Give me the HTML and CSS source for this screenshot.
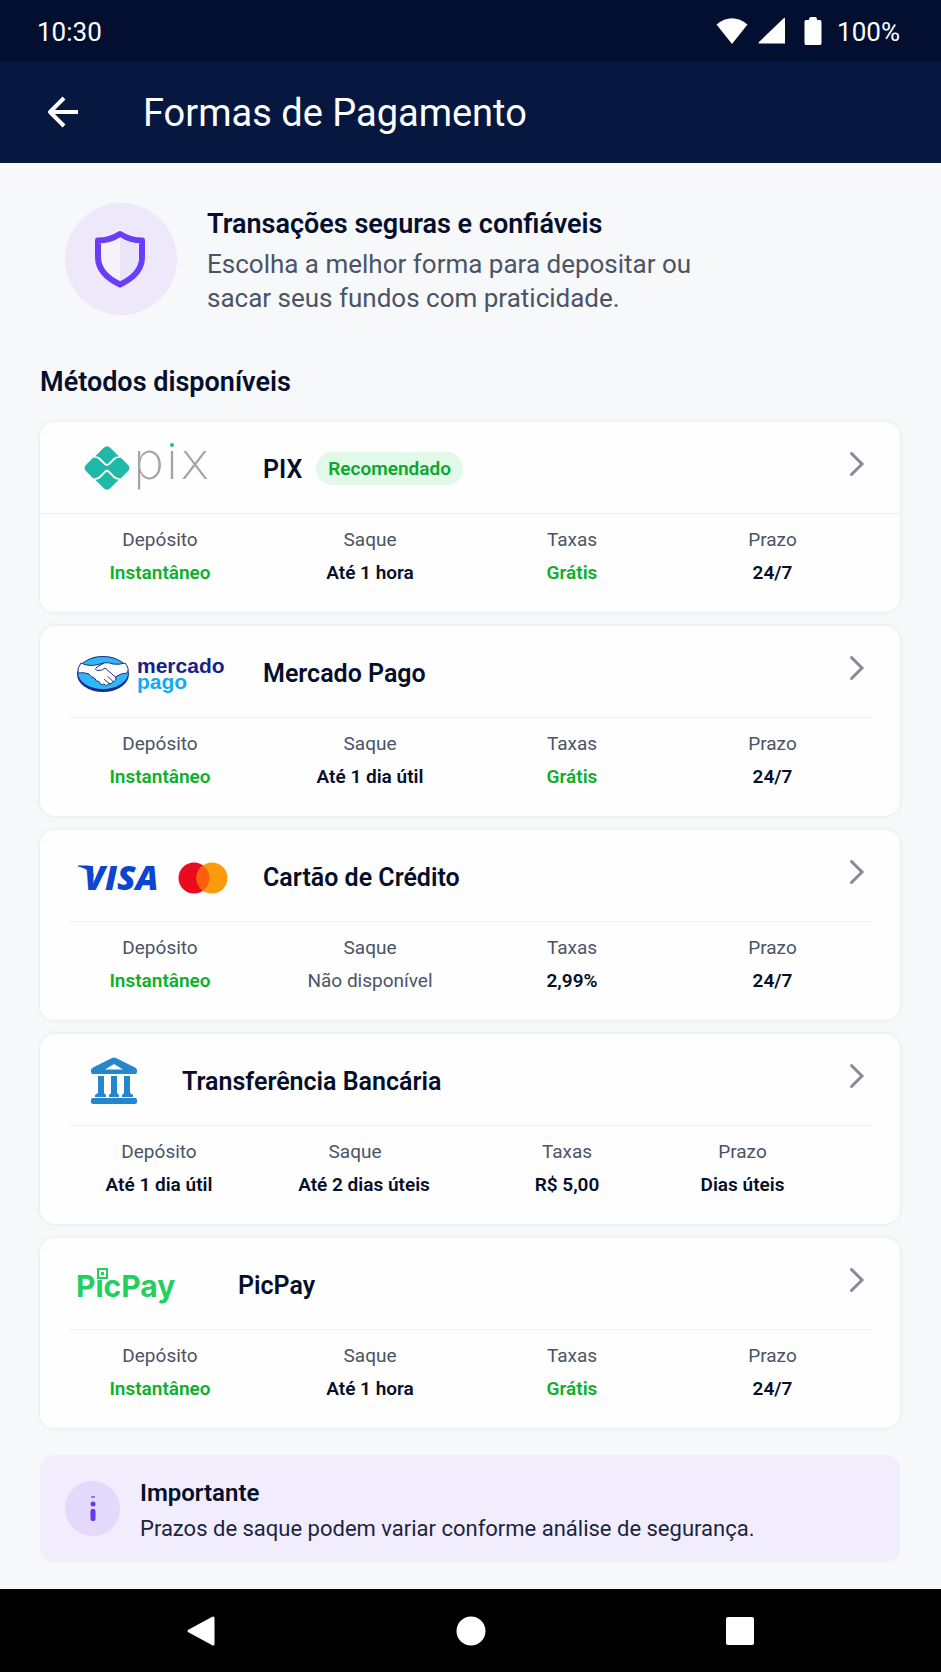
FILE: index.html
```html
<!DOCTYPE html>
<html lang="pt-BR">
<head>
    <meta charset="UTF-8">
    <meta name="viewport" content="width=device-width, initial-scale=1.0">
    <title>Formas de Pagamento</title>
    <link rel="stylesheet" href="styles.css">
</head>
<body>
    <div class="status-bar">
        <span>10:30</span>
        <div class="status-icons">
            <svg width="34" height="28" viewBox="0 0 34 28"><path d="M1.500 7.500Q17-5 32.500 7.500L17 27Z" fill="#fff"/></svg>
            <svg width="28" height="28" viewBox="0 0 28 28"><path d="M26 1Q27 0 27 2V26.500H1.500Q0 26.500 1 25Z" fill="#fff"/></svg>
            <svg class="battery" width="18" height="28" viewBox="0 0 18 28"><path d="M5 3Q5 0 7 0H11Q13 0 13 3H16Q17.500 3 17.500 5V26Q17.500 28 16 28H2Q.5 28 .5 26V5Q.5 3 2 3Z" fill="#fff"/></svg>
            <span>100%</span>
        </div>
    </div>
    <header class="app-bar">
        <button class="back" aria-label="Voltar">
            <svg width="32" height="32" viewBox="0 0 32 32" fill="none" stroke="#fff" stroke-width="4"><path d="M31 16H4M17 2L3 16L17 30" stroke-linejoin="round"/></svg>
        </button>
        <h1>Formas de Pagamento</h1>
    </header>

    <main>
        <section class="hero">
            <div class="hero-icon">
                <svg width="54" height="60" viewBox="0 0 54 60">
                    <path d="M26 5Q36 11.500 48 11.500V28Q48 45 26 55.500Q4 45 4 28V11.500Q16 11.500 26 5Z" fill="#f5f2fd" stroke="#6a3df8" stroke-width="6" stroke-linejoin="round"/>
                    <path d="M26 8Q35 14 45 14.500V28Q45 43 26 52Z" fill="#ebe5fa"/>
                </svg>
            </div>
            <div class="hero-text">
                <h2>Transações seguras e confiáveis</h2>
                <p>Escolha a melhor forma para depositar ou<br>sacar seus fundos com praticidade.</p>
            </div>
        </section>

        <h2 class="section-title">Métodos disponíveis</h2>

        <div class="methods">
            <article class="card card-full">
                <a class="card-head" href="#pix">
                    <svg class="logo" width="151" height="56" viewBox="0 0 151 56">
                        <g fill="#20b9a8" transform="translate(31 26) scale(1.07) translate(-31 -28)">
                            <path d="M20 17L27.500 9.500Q31 6 34.500 9.500L42 17Q39 17 37 19L32.500 23.500Q31 25 29.500 23.500L25 19Q23 17 20 17Z"/>
                            <path d="M20 39L27.500 46.500Q31 50 34.500 46.500L42 39Q39 39 37 37L32.500 32.500Q31 31 29.500 32.500L25 37Q23 39 20 39Z"/>
                            <path d="M18 18.500H20Q22 18.500 24 20.500L28.500 25Q31 27 33.500 25L38 20.500Q40 18.500 42 18.500H44L50.500 25Q53.500 28 50.500 31L44 37.500H42Q40 37.500 38 35.500L33.500 31Q31 28.500 28.500 31L24 35.500Q22 37.500 20 37.500H18L11.500 31Q8.500 28 11.500 25Z"/>
                        </g>
                        <text class="pix-word" x="56" y="37">pix</text>
                        <rect x="92" y="-6" width="8" height="9" fill="#fefefe"/>
                        <circle cx="96" cy="3" r="2" fill="#20b9a8"/>
                    </svg>
                    <h3>PIX</h3>
                    <span class="badge">Recomendado</span>
                    <svg class="chevron" width="16" height="26" viewBox="0 0 16 26"><path d="M2.500 2.500L13 13L2.500 23.500"/></svg>
                </a>
                <dl>
                    <div><dt>Depósito</dt><dd class="good">Instantâneo</dd></div>
                    <div><dt>Saque</dt><dd>Até 1 hora</dd></div>
                    <div><dt>Taxas</dt><dd class="good">Grátis</dd></div>
                    <div><dt>Prazo</dt><dd>24/7</dd></div>
                </dl>
            </article>

            <article class="card">
                <a class="card-head" href="#mercado-pago">
                    <svg class="logo" width="151" height="56" viewBox="0 0 151 56">
                        <ellipse cx="27" cy="28" rx="26" ry="18" fill="#1b2b8e"/>
                        <ellipse cx="27" cy="27" rx="25" ry="16" fill="#2fb8f5"/>
                        <g fill="#fff" stroke="#1b2b8e" stroke-width="1" stroke-linejoin="round">
                            <path d="M5 17Q13 21 22 18.500L28 17Q33 16 37 18Q43 19 49 17Q54 23 51 27Q45 27 39.500 31Q41 35 37 35.500Q36 38.500 33 37.500Q31 41 28 38Q25 40 23 35.500Q20 36 18.500 32Q14 31 13 28Q8 26 2 27Q1 22 5 17Z"/>
                            <path d="M28 17L21 21Q18 24 22 24.500Q26 25 29 22L39.500 31M37 35.500L32 30.500M33 37.500L28.500 33.500" stroke-linecap="round"/>
                        </g>
                        <text class="mp-word mp-top" x="61" y="27">mercado</text>
                        <text class="mp-word mp-bottom" x="61" y="43">pago</text>
                    </svg>
                    <h3>Mercado Pago</h3>
                    <svg class="chevron" width="16" height="26" viewBox="0 0 16 26"><path d="M2.500 2.500L13 13L2.500 23.500"/></svg>
                </a>
                <dl>
                    <div><dt>Depósito</dt><dd class="good">Instantâneo</dd></div>
                    <div><dt>Saque</dt><dd>Até 1 dia útil</dd></div>
                    <div><dt>Taxas</dt><dd class="good">Grátis</dd></div>
                    <div><dt>Prazo</dt><dd>24/7</dd></div>
                </dl>
            </article>

            <article class="card">
                <a class="card-head" href="#cartao">
                    <svg class="logo" width="151" height="56" viewBox="0 0 151 56">
                        <path d="M2 15.500H12Q15 15.500 16 19L18 27Q12 18 2 16.500Z" fill="#0b3cc4"/>
                        <text class="visa-word" x="8" y="40">VISA</text>
                        <circle cx="118" cy="28" r="15.500" fill="#eb0a1e"/>
                        <circle cx="136" cy="28" r="15.500" fill="#ff9a0e"/>
                        <path d="M127 15.400A15.500 15.500 0 0 1 127 40.600A15.500 15.500 0 0 1 127 15.400Z" fill="#ff5f0a"/>
                    </svg>
                    <h3>Cartão de Crédito</h3>
                    <svg class="chevron" width="16" height="26" viewBox="0 0 16 26"><path d="M2.500 2.500L13 13L2.500 23.500"/></svg>
                </a>
                <dl>
                    <div><dt>Depósito</dt><dd class="good">Instantâneo</dd></div>
                    <div><dt>Saque</dt><dd class="muted">Não disponível</dd></div>
                    <div><dt>Taxas</dt><dd>2,99%</dd></div>
                    <div><dt>Prazo</dt><dd>24/7</dd></div>
                </dl>
            </article>

            <article class="card card-bank">
                <a class="card-head" href="#transferencia">
                    <svg class="logo" width="70" height="56" viewBox="0 0 70 56">
                        <g fill="#2486cb">
                            <path fill-rule="evenodd" d="M36 4Q38 3 40 4L59 13.500Q61 14.500 61 16V18Q61 20 59 20H17Q15 20 15 18V16Q15 14.500 17 13.500ZM38 10L29 15.500H47Z"/>
                            <path d="M22 22H28V39L30 41V43H19V41L22 39ZM35 22H41V39L43 41V43H33V41L35 39ZM48 22H54V39L57 41V43H46V41L48 39Z"/>
                            <rect x="15" y="44" width="46" height="6" rx="2"/>
                        </g>
                    </svg>
                    <h3>Transferência Bancária</h3>
                    <svg class="chevron" width="16" height="26" viewBox="0 0 16 26"><path d="M2.500 2.500L13 13L2.500 23.500"/></svg>
                </a>
                <dl>
                    <div><dt>Depósito</dt><dd>Até 1 dia útil</dd></div>
                    <div class="saque"><dt>Saque</dt><dd>Até 2 dias úteis</dd></div>
                    <div><dt>Taxas</dt><dd>R$ 5,00</dd></div>
                    <div><dt>Prazo</dt><dd>Dias úteis</dd></div>
                </dl>
            </article>

            <article class="card">
                <a class="card-head" href="#picpay">
                    <svg class="logo" width="126" height="56" viewBox="0 0 126 56">
                        <text class="picpay-word" x="0" y="39">PicPay</text>
                        <rect x="19" y="9" width="14" height="13" fill="#fefefe"/>
                        <path d="M22 11H31V20H22Z" fill="none" stroke="#21d05f" stroke-width="2"/>
                        <rect x="25" y="14" width="3" height="3" fill="#21d05f"/>
                    </svg>
                    <h3>PicPay</h3>
                    <svg class="chevron" width="16" height="26" viewBox="0 0 16 26"><path d="M2.500 2.500L13 13L2.500 23.500"/></svg>
                </a>
                <dl>
                    <div><dt>Depósito</dt><dd class="good">Instantâneo</dd></div>
                    <div><dt>Saque</dt><dd>Até 1 hora</dd></div>
                    <div><dt>Taxas</dt><dd class="good">Grátis</dd></div>
                    <div><dt>Prazo</dt><dd>24/7</dd></div>
                </dl>
            </article>
        </div>

        <aside class="notice">
            <div class="notice-icon">
                <svg width="8" height="28" viewBox="0 0 8 28" fill="#6a35f5"><rect x="2" y="1" width="4" height="2" rx="1" opacity=".7"/><circle cx="4" cy="9" r="2.500"/><rect x="1.500" y="14" width="5" height="12" rx="2"/></svg>
            </div>
            <div>
                <h3>Importante</h3>
                <p>Prazos de saque podem variar conforme análise de segurança.</p>
            </div>
        </aside>
    </main>

    <nav class="nav-bar">
        <button aria-label="Voltar"><svg width="30" height="32" viewBox="0 0 30 32"><path d="M27 3V29L3 16Z" fill="#fff" stroke="#fff" stroke-width="3" stroke-linejoin="round"/></svg></button>
        <button aria-label="Início"><svg width="30" height="30" viewBox="0 0 30 30"><circle cx="15" cy="15" r="14.500" fill="#fff"/></svg></button>
        <button aria-label="Recentes"><svg width="30" height="30" viewBox="0 0 30 30"><rect x="1" y="1" width="28" height="28" rx="2" fill="#fff"/></svg></button>
    </nav>
</body>
</html>
```

FILE: styles.css
```css
* {
    box-sizing: border-box;
}
body {
    font-family: Roboto, "Liberation Sans", sans-serif;
    margin: 0;
    min-height: 100vh;
    display: flex;
    flex-direction: column;
    background: #f7f8fa;
    color: #050f2c;
}
h1, h2, h3, p, dl, dd {
    margin: 0;
}
button {
    display: flex;
    padding: 0;
    border: none;
    background: none;
    cursor: pointer;
}
svg {
    display: block;
    flex-shrink: 0;
    overflow: visible;
}

/* Barra de status */
.status-bar {
    display: flex;
    justify-content: space-between;
    align-items: center;
    height: 61px;
    padding: 3px 41px 0 37px;
    background: #020f30;
    color: #fff;
    font-size: 26px;
}
.status-icons {
    display: flex;
    align-items: center;
    gap: 9px;
}
.status-icons svg {
    margin-bottom: 3px;
}
.status-icons .battery {
    margin-left: 9px;
    margin-right: 6px;
}

/* Cabeçalho */
.app-bar {
    display: flex;
    align-items: center;
    gap: 64px;
    height: 102px;
    padding: 0 47px;
    background: #061740;
    color: #fff;
}
.app-bar h1 {
    padding-top: 2px;
    font-size: 38px;
    font-weight: 400;
}

main {
    flex: 1;
    padding: 40px 41px 27px 40px;
}
.hero {
    display: flex;
    align-items: center;
    gap: 30px;
    padding-left: 25px;
}
.hero-icon {
    display: flex;
    align-items: center;
    justify-content: center;
    width: 112px;
    height: 112px;
    border-radius: 50%;
    background: #eee8fb;
}
.hero-text {
    padding-top: 4px;
}
.hero h2, .section-title {
    font-size: 27px;
    font-weight: 600;
    line-height: 34px;
}
.hero p {
    margin-top: 6px;
    font-size: 26px;
    line-height: 34px;
    color: #4a5466;
}
.section-title {
    margin: 50px 0 23px;
}

/* Cartões */
.methods {
    display: flex;
    flex-direction: column;
    gap: 14px;
}
.card {
    background: #fefefe;
    border-radius: 15px;
    box-shadow: 0 0 4px rgba(20, 35, 70, 0.09);
}
.card-head {
    display: flex;
    align-items: center;
    height: 91px;
    padding: 4px 35px 0 36px;
    color: inherit;
    text-decoration: none;
}
.logo {
    margin-right: 36px;
}
.card h3 {
    font-size: 25px;
    font-weight: 600;
}
.badge {
    margin: 0 0 3px 14px;
    padding: 0 12px;
    border-radius: 17px;
    background: #e2f8e9;
    color: #0aa82b;
    font-size: 19px;
    font-weight: 600;
    line-height: 33px;
}
.chevron {
    margin: 0 0 11px auto;
    fill: none;
    stroke: #858c98;
    stroke-width: 3;
    stroke-linecap: round;
}
.card dl {
    display: grid;
    grid-template-columns: 216fr 204fr 200fr 201fr;
    padding: 14px 27px 27px 12px;
    border-top: 1px solid transparent;
    background: linear-gradient(#f1f3f5, #f1f3f5) 28px 0 / calc(100% - 56px) 1px no-repeat border-box;
    text-align: center;
    font-size: 19px;
    line-height: 24px;
}
.card-full dl {
    border-top-color: #edf0f3;
}
.card-bank dl {
    grid-template-columns: 214fr 196fr 210fr 141fr;
    padding-right: 87px;
}
.card dt {
    color: #4a5466;
}
.card-bank .saque dt {
    padding-right: 18px;
}
.card dd {
    margin-top: 9px;
    font-weight: 600;
}
.card .good {
    color: #0cb02b;
}
.card .muted {
    color: #4a5466;
    font-weight: 400;
}

/* Textos dos logotipos */
.pix-word {
    font: 200 52px "DejaVu Sans", sans-serif;
    fill: #a3a5a4;
}
.mp-word {
    font: 700 21px "Liberation Sans", sans-serif;
}
.mp-top {
    fill: #17218a;
}
.mp-bottom {
    fill: #12aaf8;
}
.visa-word {
    font: italic 800 34px "Open Sans", sans-serif;
    fill: #0b45d0;
}
.picpay-word {
    font: 700 30px Inter, sans-serif;
    fill: #21d05f;
}

/* Aviso */
.notice {
    display: flex;
    align-items: center;
    gap: 20px;
    margin-top: 27px;
    padding: 22px 25px 17px;
    border-radius: 14px;
    background: #f1edfc;
}
.notice-icon {
    display: flex;
    align-items: center;
    justify-content: center;
    width: 55px;
    height: 55px;
    margin-bottom: 5px;
    border-radius: 50%;
    background: #e3dafb;
}
.notice h3 {
    font-size: 24px;
    font-weight: 600;
    line-height: 32px;
}
.notice p {
    margin-top: 4px;
    font-size: 22px;
    line-height: 32px;
    color: #1c2540;
}

/* Navegação do sistema */
.nav-bar {
    display: flex;
    align-items: center;
    justify-content: space-between;
    height: 83px;
    padding: 0 186px;
    background: #000;
}
```
